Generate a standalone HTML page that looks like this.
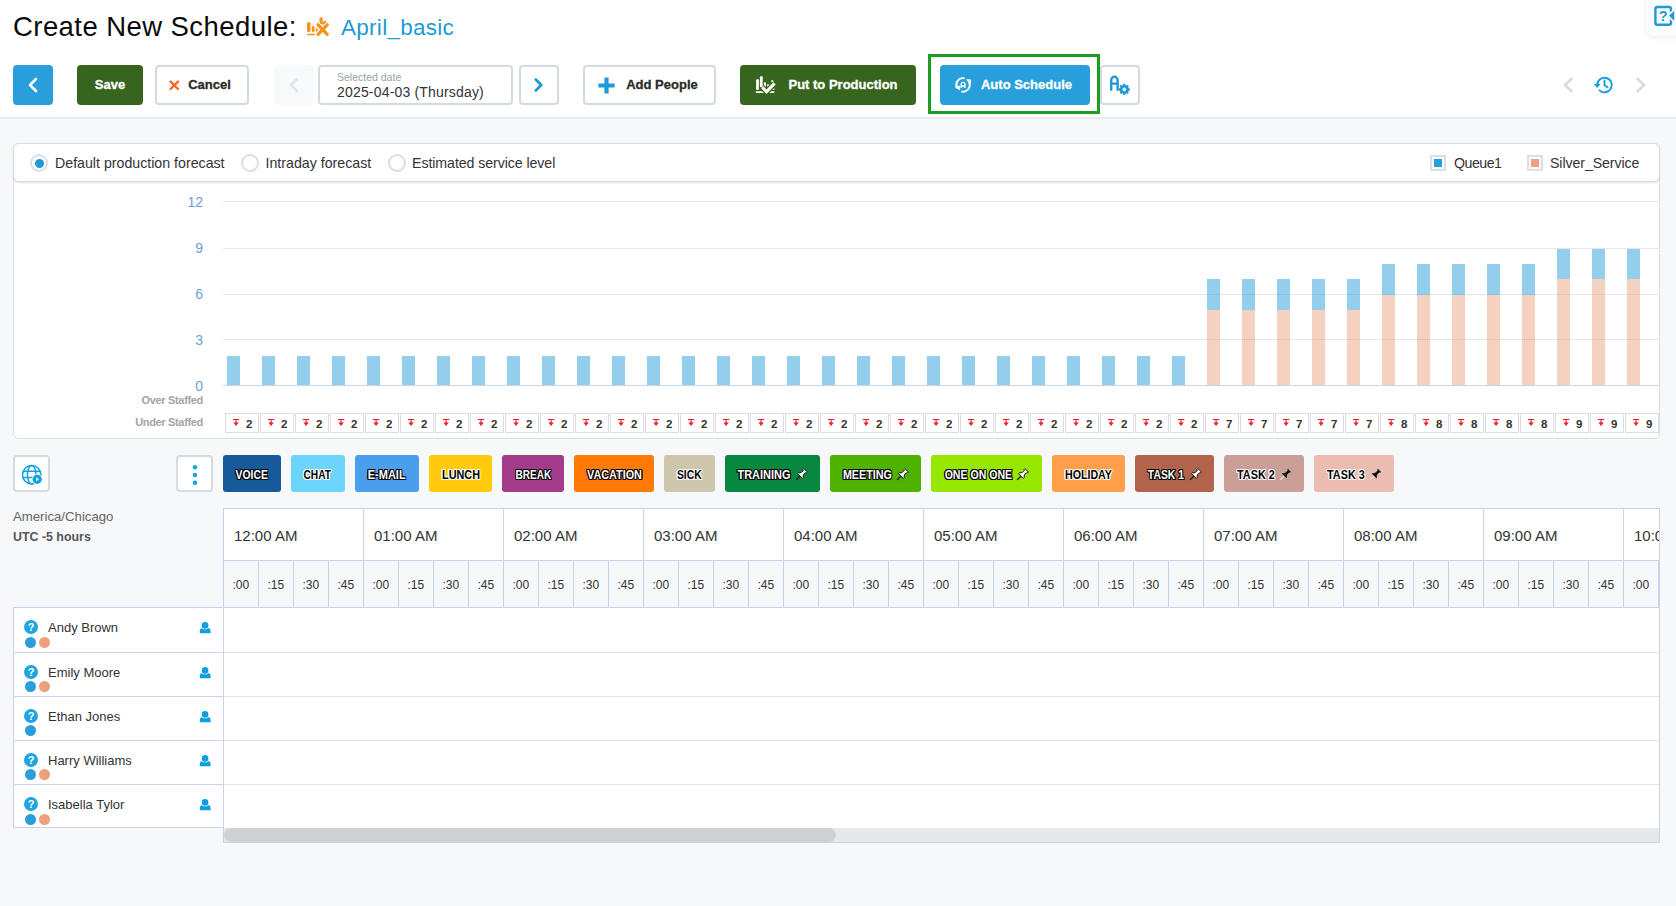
<!DOCTYPE html>
<html lang="en"><head><meta charset="utf-8"><title>Create New Schedule</title>
<style>
*{box-sizing:border-box;margin:0;padding:0}
html,body{width:1676px;height:906px;overflow:hidden}
body{background:#f6f8fa;font-family:"Liberation Sans",sans-serif;color:#222;position:relative}
.abs{position:absolute}
.hdr{position:absolute;left:0;top:0;width:1676px;height:119px;background:#fff;border-bottom:2px solid #e7ebee}
.title{position:absolute;left:13px;top:9px;font-size:27.5px;line-height:36px;color:#0a0a0a;white-space:nowrap;letter-spacing:0.43px}
.sname{position:absolute;left:341px;top:11px;font-size:22.5px;line-height:34px;color:#1f9ad6;white-space:nowrap;letter-spacing:0.28px}
.btn{position:absolute;top:65px;height:40px;border-radius:4px;display:flex;align-items:center;justify-content:center;font-weight:bold;font-size:13px;white-space:nowrap;-webkit-text-stroke:0.3px currentColor}
.btn.blue{background:#289fdb;color:#fff}
.btn.green{background:#38651d;color:#fff}
.btn.wh{background:#fff;border:2px solid #d2dbe3;color:#2b2b2b}
.cond{display:inline-block;position:relative;top:-.5px}

.panel{position:absolute;left:13px;top:143px;width:1647px;height:296px;background:#fff;border:1px solid #d6dee6;border-radius:6px}
.pbar{position:absolute;left:-1px;top:-1px;width:1647px;height:39px;background:#fff;border:1px solid #d6dee6;border-radius:6px;box-shadow:0 1px 2px rgba(120,140,160,.25)}
.radio{position:absolute;top:10px;width:18px;height:18px;border-radius:50%;border:2px solid #d8dfe4;background:#fff}
.radio.on::after{content:"";position:absolute;left:2.5px;top:2.5px;width:9px;height:9px;border-radius:50%;background:#1f9ad6}
.rl{position:absolute;top:9px;font-size:14.2px;line-height:20px;color:#333;white-space:nowrap}
.cb{position:absolute;top:11px;width:16px;height:16px;border:2px solid #d9e0e6;background:#fff}
.cb i{position:absolute;left:2px;top:2px;width:8px;height:8px}
.yl{position:absolute;width:40px;text-align:right;font-size:14px;line-height:16px;color:#6f9fd0}
.gl{position:absolute;left:209px;width:1437px;height:1px;background:#e6e6e6}
.bar{position:absolute;width:13px}
.sl{position:absolute;width:120px;text-align:right;font-size:11px;line-height:13px;color:#a4a4a4;font-weight:bold;letter-spacing:-.33px}
.uc{position:absolute;top:269px;width:33.5px;height:19.5px;border:1px solid #d9dde1;background:#fff;font-size:11.5px;font-weight:bold;color:#333;line-height:20.5px;padding-left:20px}
.uc svg{position:absolute;left:5.8px;top:4.7px;width:8.2px;height:8.2px}

.sq{position:absolute;top:455px;width:37px;height:37px;background:#fff;border:2px solid #d3dbe3;border-radius:4px}
.act{position:absolute;top:455px;height:37px;border-radius:3px;font-size:12px;font-weight:bold;color:#fff;white-space:nowrap;text-shadow:-1px -1px 0 #000,1px -1px 0 #000,-1px 1px 0 #000,1px 1px 0 #000,0 1px 0 #000,0 -1px 0 #000,1px 0 0 #000,-1px 0 0 #000}
.act.dk{color:#000;text-shadow:-1px -1px 0 #fff,1px -1px 0 #fff,-1px 1px 0 #fff,1px 1px 0 #fff,0 1px 0 #fff,0 -1px 0 #fff,1px 0 0 #fff,-1px 0 0 #fff}
.act span{position:absolute;top:12.5px;line-height:14px;display:block;transform-origin:center}
.act .pin{position:absolute;top:13px;width:13px;height:13px}
.tz{position:absolute;left:13px;font-size:13.2px;line-height:16px;color:#666;white-space:nowrap}
.grid{position:absolute;left:223px;top:508px;width:1437px;height:335px;border:1px solid #c9d3ef;background:#fff;overflow:hidden}
.hr{position:absolute;top:0;height:52px;width:140px;border-right:1px solid #c9d3ef;border-bottom:1px solid #c9d3ef;font-size:15px;line-height:53px;padding-left:10px;color:#333;white-space:nowrap;background:#fff}
.qr{position:absolute;top:52px;height:47px;width:35px;border-right:1px solid #c9d3ef;border-bottom:1px solid #c9d3ef;background:#f6f8fa;font-size:12px;line-height:49px;padding-left:8.5px;color:#333}
.rowl{position:absolute;left:0;width:1437px;height:1px;background:#e3e3e3}
.agents{position:absolute;left:13px;top:607px;width:211px;height:221px;border:1px solid #c9d3ef;background:#fff}
.ag{position:absolute;left:0;width:209px;border-bottom:1px solid #c9d3ef}
.ag .nm{position:absolute;left:34px;top:12px;font-size:13px;line-height:16px;color:#333;white-space:nowrap}
.ag .q{position:absolute;left:10px;top:12px;width:14px;height:14px;border-radius:50%;background:#1fa5e0;color:#fff;font-size:11px;font-weight:bold;line-height:14px;text-align:center}
.ag .d{position:absolute;top:29px;width:11px;height:11px;border-radius:50%}
.ag svg{position:absolute;left:184.5px;top:13.5px;overflow:visible}
.ag.first svg{top:14.3px}
</style></head>
<body>
<div class="hdr">
<div class="title">Create New Schedule:</div>
<svg class="abs" style="left:300px;top:12px" width="36" height="30" viewBox="0 0 36 30"><g fill="#f7931a"><rect x="7" y="9.9" width="3.5" height="10.3" rx="1.6"/><rect x="11.8" y="13.9" width="2.8" height="6.1" rx="1.3"/><path d="M15.9 15.4 L18.6 17.9 L15.9 20.2z"/><rect x="7" y="21.7" width="8" height="1.5" rx=".5"/><rect x="19.5" y="5.2" width="3.3" height="7" rx="1.6"/></g><g stroke="#fff" stroke-width="5" stroke-linecap="round"><path d="M18.1 12.8 L27.2 22.3 M27.2 12.8 L18.1 22.3"/></g><g stroke="#f7931a" stroke-width="3.3" stroke-linecap="round" fill="none"><path d="M18.1 12.8 L27.2 22.3 M27.2 12.8 L18.1 22.3"/><path d="M25.2 9.6 L23.2 11.6" stroke-width="2.2"/></g></svg>
<div class="sname">April_basic</div>
<div class="btn blue" style="left:13px;width:40px"><svg width="14" height="16" viewBox="0 0 14 16"><path d="M10 2 L4 8 L10 14" fill="none" stroke="#fff" stroke-width="2.6" stroke-linecap="round" stroke-linejoin="round"/></svg></div>
<div class="btn green" style="left:77px;width:66px"><span class="cond">Save</span></div>
<div class="btn wh" style="left:155px;width:94px"><svg width="11" height="11" viewBox="0 0 11 11" style="margin-right:8px;margin-left:-4px"><path d="M1.6 1.6 L9 9 M9 1.6 L1.6 9" stroke="#f26a1b" stroke-width="2.4" stroke-linecap="round"/></svg><span class="cond">Cancel</span></div>
<div class="btn" style="left:274px;width:39px;background:#f8f9fa"><svg width="14" height="16" viewBox="0 0 14 16"><path d="M10 2 L4 8 L10 14" fill="none" stroke="#dfe3e6" stroke-width="2.4" stroke-linecap="round" stroke-linejoin="round"/></svg></div>
<div class="btn wh" style="left:318px;width:195px;justify-content:flex-start;font-weight:normal"><div style="position:absolute;left:17px;top:4px;font-size:10.5px;color:#9aa3aa;line-height:13px;-webkit-text-stroke:0">Selected date</div><div style="position:absolute;left:17px;top:16px;font-size:14px;letter-spacing:.18px;color:#333;line-height:18px;-webkit-text-stroke:0">2025-04-03 (Thursday)</div></div>
<div class="btn wh" style="left:519px;width:40px"><svg width="14" height="16" viewBox="0 0 14 16"><path d="M3.8 2.6 L9.2 8 L3.8 13.4" fill="none" stroke="#1f9ad6" stroke-width="2.8" stroke-linecap="round" stroke-linejoin="round"/></svg></div>
<div class="btn wh" style="left:583px;width:133px"><svg width="17" height="17" viewBox="0 0 17 17" style="margin-right:11px;margin-left:-3px"><path d="M8.5 0.4 V16.6 M0.4 8.5 H16.6" stroke="#1f9ad6" stroke-width="4.2" stroke-linecap="butt"/></svg><span class="cond">Add People</span></div>
<div class="btn green" style="left:740px;width:176px"><svg width="36" height="30" viewBox="0 0 36 30" style="position:absolute;left:8px;top:5px"><g fill="#fff"><rect x="8.1" y="9.3" width="2.8" height="10.6" rx="1"/><rect x="11.9" y="6.3" width="2.8" height="11" rx="1"/><rect x="15.9" y="12.3" width="2.1" height="5" rx=".8"/><rect x="19.2" y="14.2" width="2" height="2.6" rx=".6"/><rect x="23.2" y="10.3" width="2.3" height="2.3" rx=".8"/><rect x="24.5" y="18" width="1.8" height="2" rx=".5"/><rect x="7.8" y="21.2" width="18.5" height="1.7" rx=".4"/></g><path d="M14.4 17.2 L18.5 21.8 L26.6 13.4" fill="none" stroke="#38651d" stroke-width="5.6" stroke-linejoin="miter"/><path d="M14.4 17.2 L18.5 21.8 L26.6 13.4" fill="none" stroke="#fff" stroke-width="3.1" stroke-linejoin="miter"/></svg><span class="cond" style="margin-left:30px">Put to Production</span></div>
<div class="abs" style="left:928px;top:54px;width:172px;height:60px;border:3px solid #1f9d22"></div>
<div class="btn blue" style="left:940px;width:150px"><svg width="20" height="20" viewBox="0 0 20 20" style="position:absolute;left:13px;top:10px"><g fill="none" stroke="#fff" stroke-width="1.9" stroke-linecap="round"><path d="M10.9 3.2 A6.7 6.7 0 0 0 3.9 12.6"/><path d="M16.3 7.6 A6.7 6.7 0 0 1 8.9 16.6"/></g><path d="M2.3 11.8 L6.6 11 L6.6 15z" fill="#fff" stroke="#fff" stroke-width=".7" stroke-linejoin="round"/><path d="M13.4 4.8 H17.6 V8.6z" fill="#fff" stroke="#fff" stroke-width=".7" stroke-linejoin="round"/><path d="M8.2 13 V9.2 a1.85 1.85 0 0 1 3.7 0 V13 M8.2 11 H11.9" fill="none" stroke="#fff" stroke-width="1.4"/></svg><span class="cond" style="margin-left:23px">Auto Schedule</span></div>
<div class="btn wh" style="left:1100px;width:40px"><svg width="40" height="40" viewBox="0 0 40 40" style="position:absolute;left:-2px;top:-2px"><path d="M11.2 24.8 V15 a3.2 3.2 0 0 1 6.4 0 V24.8 M11.2 18.6 H17.6" fill="none" stroke="#1f9ad6" stroke-width="2.4" stroke-linecap="round"/><g fill="#1f9ad6"><rect x="23.05" y="18.80" width="2.5" height="3" rx=".9" transform="rotate(0 24.3 24.4)"/><rect x="23.05" y="18.80" width="2.5" height="3" rx=".9" transform="rotate(45 24.3 24.4)"/><rect x="23.05" y="18.80" width="2.5" height="3" rx=".9" transform="rotate(90 24.3 24.4)"/><rect x="23.05" y="18.80" width="2.5" height="3" rx=".9" transform="rotate(135 24.3 24.4)"/><rect x="23.05" y="18.80" width="2.5" height="3" rx=".9" transform="rotate(180 24.3 24.4)"/><rect x="23.05" y="18.80" width="2.5" height="3" rx=".9" transform="rotate(225 24.3 24.4)"/><rect x="23.05" y="18.80" width="2.5" height="3" rx=".9" transform="rotate(270 24.3 24.4)"/><rect x="23.05" y="18.80" width="2.5" height="3" rx=".9" transform="rotate(315 24.3 24.4)"/></g><circle cx="24.3" cy="24.4" r="3.1" fill="none" stroke="#1f9ad6" stroke-width="2.6"/></svg></div>
<svg class="abs" style="left:1561px;top:76px" width="14" height="18" viewBox="0 0 14 18"><path d="M10.5 2.8 L4 9 L10.5 15.2" fill="none" stroke="#d9dde0" stroke-width="2.7" stroke-linecap="round" stroke-linejoin="round"/></svg>
<svg class="abs" style="left:1593px;top:74px" width="22" height="22" viewBox="0 0 22 22"><g fill="none" stroke="#14a0dc" stroke-width="1.9" stroke-linecap="round" stroke-linejoin="round"><path d="M4.2 11 A7.3 7.3 0 1 1 6.5 16.4"/><path d="M11.5 6.5 V11.3 L14.5 13.2"/></g><path d="M0.8 10 H7.6 L4.2 14z" fill="#14a0dc"/></svg>
<svg class="abs" style="left:1634px;top:76px" width="14" height="18" viewBox="0 0 14 18"><path d="M3.5 2.8 L10 9 L3.5 15.2" fill="none" stroke="#d9dde0" stroke-width="2.7" stroke-linecap="round" stroke-linejoin="round"/></svg>
<div class="abs" style="left:1646px;top:-6px;width:40px;height:42px;background:#fafbfc;border-radius:0 0 0 7px;box-shadow:0 1px 6px rgba(60,70,80,.11)"></div>
<svg class="abs" style="left:1650px;top:0px" width="26" height="32" viewBox="0 0 26 32"><rect x="5.4" y="7" width="15.6" height="17.8" rx="2" fill="none" stroke="#1f9ad6" stroke-width="2.4"/><path d="M25.2 9 L17.6 15.8 L25.2 22.6z" fill="#1f9ad6" stroke="#f9fafb" stroke-width="2" /><path d="M24 10.9 L19.4 15.8 L24 20.6z" fill="#1f9ad6"/><text x="13.2" y="21.2" font-size="14.5" font-weight="bold" fill="#1f9ad6" text-anchor="middle" font-family="Liberation Sans, sans-serif">?</text></svg>
</div>
<div class="panel">
<div class="pbar">
<div class="radio on" style="left:16px"></div><div class="rl" style="left:41px">Default production forecast</div>
<div class="radio" style="left:227px"></div><div class="rl" style="left:251.5px">Intraday forecast</div>
<div class="radio" style="left:374px"></div><div class="rl" style="left:398px;letter-spacing:-.08px">Estimated service level</div>
<div class="cb" style="left:1416px"><i style="background:#289fdb"></i></div><div class="rl" style="left:1440px;letter-spacing:-.5px">Queue1</div>
<div class="cb" style="left:1513px"><i style="background:#f0a07a"></i></div><div class="rl" style="left:1536px;letter-spacing:-.1px">Silver_Service</div>
</div>
<div class="yl" style="left:149px;top:50px">12</div>
<div class="gl" style="top:57px"></div>
<div class="yl" style="left:149px;top:96px">9</div>
<div class="gl" style="top:104px"></div>
<div class="yl" style="left:149px;top:142px">6</div>
<div class="gl" style="top:150px"></div>
<div class="yl" style="left:149px;top:188px">3</div>
<div class="gl" style="top:195px"></div>
<div class="yl" style="left:149px;top:234px">0</div>
<div class="gl" style="top:241px;background:#ccd6eb"></div>
<div class="bar" style="left:213px;top:212px;height:29px;background:rgba(40,159,219,.5)"></div>
<div class="bar" style="left:248px;top:212px;height:29px;background:rgba(40,159,219,.5)"></div>
<div class="bar" style="left:283px;top:212px;height:29px;background:rgba(40,159,219,.5)"></div>
<div class="bar" style="left:318px;top:212px;height:29px;background:rgba(40,159,219,.5)"></div>
<div class="bar" style="left:353px;top:212px;height:29px;background:rgba(40,159,219,.5)"></div>
<div class="bar" style="left:388px;top:212px;height:29px;background:rgba(40,159,219,.5)"></div>
<div class="bar" style="left:423px;top:212px;height:29px;background:rgba(40,159,219,.5)"></div>
<div class="bar" style="left:458px;top:212px;height:29px;background:rgba(40,159,219,.5)"></div>
<div class="bar" style="left:493px;top:212px;height:29px;background:rgba(40,159,219,.5)"></div>
<div class="bar" style="left:528px;top:212px;height:29px;background:rgba(40,159,219,.5)"></div>
<div class="bar" style="left:563px;top:212px;height:29px;background:rgba(40,159,219,.5)"></div>
<div class="bar" style="left:598px;top:212px;height:29px;background:rgba(40,159,219,.5)"></div>
<div class="bar" style="left:633px;top:212px;height:29px;background:rgba(40,159,219,.5)"></div>
<div class="bar" style="left:668px;top:212px;height:29px;background:rgba(40,159,219,.5)"></div>
<div class="bar" style="left:703px;top:212px;height:29px;background:rgba(40,159,219,.5)"></div>
<div class="bar" style="left:738px;top:212px;height:29px;background:rgba(40,159,219,.5)"></div>
<div class="bar" style="left:773px;top:212px;height:29px;background:rgba(40,159,219,.5)"></div>
<div class="bar" style="left:808px;top:212px;height:29px;background:rgba(40,159,219,.5)"></div>
<div class="bar" style="left:843px;top:212px;height:29px;background:rgba(40,159,219,.5)"></div>
<div class="bar" style="left:878px;top:212px;height:29px;background:rgba(40,159,219,.5)"></div>
<div class="bar" style="left:913px;top:212px;height:29px;background:rgba(40,159,219,.5)"></div>
<div class="bar" style="left:948px;top:212px;height:29px;background:rgba(40,159,219,.5)"></div>
<div class="bar" style="left:983px;top:212px;height:29px;background:rgba(40,159,219,.5)"></div>
<div class="bar" style="left:1018px;top:212px;height:29px;background:rgba(40,159,219,.5)"></div>
<div class="bar" style="left:1053px;top:212px;height:29px;background:rgba(40,159,219,.5)"></div>
<div class="bar" style="left:1088px;top:212px;height:29px;background:rgba(40,159,219,.5)"></div>
<div class="bar" style="left:1123px;top:212px;height:29px;background:rgba(40,159,219,.5)"></div>
<div class="bar" style="left:1158px;top:212px;height:29px;background:rgba(40,159,219,.5)"></div>
<div class="bar" style="left:1193px;top:166px;height:75px;background:rgba(236,166,130,.5)"></div>
<div class="bar" style="left:1193px;top:135px;height:31px;background:rgba(40,159,219,.5)"></div>
<div class="bar" style="left:1228px;top:166px;height:75px;background:rgba(236,166,130,.5)"></div>
<div class="bar" style="left:1228px;top:135px;height:31px;background:rgba(40,159,219,.5)"></div>
<div class="bar" style="left:1263px;top:166px;height:75px;background:rgba(236,166,130,.5)"></div>
<div class="bar" style="left:1263px;top:135px;height:31px;background:rgba(40,159,219,.5)"></div>
<div class="bar" style="left:1298px;top:166px;height:75px;background:rgba(236,166,130,.5)"></div>
<div class="bar" style="left:1298px;top:135px;height:31px;background:rgba(40,159,219,.5)"></div>
<div class="bar" style="left:1333px;top:166px;height:75px;background:rgba(236,166,130,.5)"></div>
<div class="bar" style="left:1333px;top:135px;height:31px;background:rgba(40,159,219,.5)"></div>
<div class="bar" style="left:1368px;top:151px;height:90px;background:rgba(236,166,130,.5)"></div>
<div class="bar" style="left:1368px;top:120px;height:31px;background:rgba(40,159,219,.5)"></div>
<div class="bar" style="left:1403px;top:151px;height:90px;background:rgba(236,166,130,.5)"></div>
<div class="bar" style="left:1403px;top:120px;height:31px;background:rgba(40,159,219,.5)"></div>
<div class="bar" style="left:1438px;top:151px;height:90px;background:rgba(236,166,130,.5)"></div>
<div class="bar" style="left:1438px;top:120px;height:31px;background:rgba(40,159,219,.5)"></div>
<div class="bar" style="left:1473px;top:151px;height:90px;background:rgba(236,166,130,.5)"></div>
<div class="bar" style="left:1473px;top:120px;height:31px;background:rgba(40,159,219,.5)"></div>
<div class="bar" style="left:1508px;top:151px;height:90px;background:rgba(236,166,130,.5)"></div>
<div class="bar" style="left:1508px;top:120px;height:31px;background:rgba(40,159,219,.5)"></div>
<div class="bar" style="left:1543px;top:135px;height:106px;background:rgba(236,166,130,.5)"></div>
<div class="bar" style="left:1543px;top:105px;height:30px;background:rgba(40,159,219,.5)"></div>
<div class="bar" style="left:1578px;top:135px;height:106px;background:rgba(236,166,130,.5)"></div>
<div class="bar" style="left:1578px;top:105px;height:30px;background:rgba(40,159,219,.5)"></div>
<div class="bar" style="left:1613px;top:135px;height:106px;background:rgba(236,166,130,.5)"></div>
<div class="bar" style="left:1613px;top:105px;height:30px;background:rgba(40,159,219,.5)"></div>
<div class="sl" style="left:69px;top:250px">Over Staffed</div>
<div class="sl" style="left:69px;top:272px">Under Staffed</div>
<div class="uc" style="left:211px"><svg width="9" height="9" viewBox="0 0 9 9"><path d="M1 0.6 H8" stroke="#e8202a" stroke-width="1.2"/><path d="M4.5 1.5 V5" stroke="#e8202a" stroke-width="1.4"/><path d="M1.5 3.8 H7.5 L4.5 7.8z" fill="#e8202a"/></svg>2</div>
<div class="uc" style="left:246px"><svg width="9" height="9" viewBox="0 0 9 9"><path d="M1 0.6 H8" stroke="#e8202a" stroke-width="1.2"/><path d="M4.5 1.5 V5" stroke="#e8202a" stroke-width="1.4"/><path d="M1.5 3.8 H7.5 L4.5 7.8z" fill="#e8202a"/></svg>2</div>
<div class="uc" style="left:281px"><svg width="9" height="9" viewBox="0 0 9 9"><path d="M1 0.6 H8" stroke="#e8202a" stroke-width="1.2"/><path d="M4.5 1.5 V5" stroke="#e8202a" stroke-width="1.4"/><path d="M1.5 3.8 H7.5 L4.5 7.8z" fill="#e8202a"/></svg>2</div>
<div class="uc" style="left:316px"><svg width="9" height="9" viewBox="0 0 9 9"><path d="M1 0.6 H8" stroke="#e8202a" stroke-width="1.2"/><path d="M4.5 1.5 V5" stroke="#e8202a" stroke-width="1.4"/><path d="M1.5 3.8 H7.5 L4.5 7.8z" fill="#e8202a"/></svg>2</div>
<div class="uc" style="left:351px"><svg width="9" height="9" viewBox="0 0 9 9"><path d="M1 0.6 H8" stroke="#e8202a" stroke-width="1.2"/><path d="M4.5 1.5 V5" stroke="#e8202a" stroke-width="1.4"/><path d="M1.5 3.8 H7.5 L4.5 7.8z" fill="#e8202a"/></svg>2</div>
<div class="uc" style="left:386px"><svg width="9" height="9" viewBox="0 0 9 9"><path d="M1 0.6 H8" stroke="#e8202a" stroke-width="1.2"/><path d="M4.5 1.5 V5" stroke="#e8202a" stroke-width="1.4"/><path d="M1.5 3.8 H7.5 L4.5 7.8z" fill="#e8202a"/></svg>2</div>
<div class="uc" style="left:421px"><svg width="9" height="9" viewBox="0 0 9 9"><path d="M1 0.6 H8" stroke="#e8202a" stroke-width="1.2"/><path d="M4.5 1.5 V5" stroke="#e8202a" stroke-width="1.4"/><path d="M1.5 3.8 H7.5 L4.5 7.8z" fill="#e8202a"/></svg>2</div>
<div class="uc" style="left:456px"><svg width="9" height="9" viewBox="0 0 9 9"><path d="M1 0.6 H8" stroke="#e8202a" stroke-width="1.2"/><path d="M4.5 1.5 V5" stroke="#e8202a" stroke-width="1.4"/><path d="M1.5 3.8 H7.5 L4.5 7.8z" fill="#e8202a"/></svg>2</div>
<div class="uc" style="left:491px"><svg width="9" height="9" viewBox="0 0 9 9"><path d="M1 0.6 H8" stroke="#e8202a" stroke-width="1.2"/><path d="M4.5 1.5 V5" stroke="#e8202a" stroke-width="1.4"/><path d="M1.5 3.8 H7.5 L4.5 7.8z" fill="#e8202a"/></svg>2</div>
<div class="uc" style="left:526px"><svg width="9" height="9" viewBox="0 0 9 9"><path d="M1 0.6 H8" stroke="#e8202a" stroke-width="1.2"/><path d="M4.5 1.5 V5" stroke="#e8202a" stroke-width="1.4"/><path d="M1.5 3.8 H7.5 L4.5 7.8z" fill="#e8202a"/></svg>2</div>
<div class="uc" style="left:561px"><svg width="9" height="9" viewBox="0 0 9 9"><path d="M1 0.6 H8" stroke="#e8202a" stroke-width="1.2"/><path d="M4.5 1.5 V5" stroke="#e8202a" stroke-width="1.4"/><path d="M1.5 3.8 H7.5 L4.5 7.8z" fill="#e8202a"/></svg>2</div>
<div class="uc" style="left:596px"><svg width="9" height="9" viewBox="0 0 9 9"><path d="M1 0.6 H8" stroke="#e8202a" stroke-width="1.2"/><path d="M4.5 1.5 V5" stroke="#e8202a" stroke-width="1.4"/><path d="M1.5 3.8 H7.5 L4.5 7.8z" fill="#e8202a"/></svg>2</div>
<div class="uc" style="left:631px"><svg width="9" height="9" viewBox="0 0 9 9"><path d="M1 0.6 H8" stroke="#e8202a" stroke-width="1.2"/><path d="M4.5 1.5 V5" stroke="#e8202a" stroke-width="1.4"/><path d="M1.5 3.8 H7.5 L4.5 7.8z" fill="#e8202a"/></svg>2</div>
<div class="uc" style="left:666px"><svg width="9" height="9" viewBox="0 0 9 9"><path d="M1 0.6 H8" stroke="#e8202a" stroke-width="1.2"/><path d="M4.5 1.5 V5" stroke="#e8202a" stroke-width="1.4"/><path d="M1.5 3.8 H7.5 L4.5 7.8z" fill="#e8202a"/></svg>2</div>
<div class="uc" style="left:701px"><svg width="9" height="9" viewBox="0 0 9 9"><path d="M1 0.6 H8" stroke="#e8202a" stroke-width="1.2"/><path d="M4.5 1.5 V5" stroke="#e8202a" stroke-width="1.4"/><path d="M1.5 3.8 H7.5 L4.5 7.8z" fill="#e8202a"/></svg>2</div>
<div class="uc" style="left:736px"><svg width="9" height="9" viewBox="0 0 9 9"><path d="M1 0.6 H8" stroke="#e8202a" stroke-width="1.2"/><path d="M4.5 1.5 V5" stroke="#e8202a" stroke-width="1.4"/><path d="M1.5 3.8 H7.5 L4.5 7.8z" fill="#e8202a"/></svg>2</div>
<div class="uc" style="left:771px"><svg width="9" height="9" viewBox="0 0 9 9"><path d="M1 0.6 H8" stroke="#e8202a" stroke-width="1.2"/><path d="M4.5 1.5 V5" stroke="#e8202a" stroke-width="1.4"/><path d="M1.5 3.8 H7.5 L4.5 7.8z" fill="#e8202a"/></svg>2</div>
<div class="uc" style="left:806px"><svg width="9" height="9" viewBox="0 0 9 9"><path d="M1 0.6 H8" stroke="#e8202a" stroke-width="1.2"/><path d="M4.5 1.5 V5" stroke="#e8202a" stroke-width="1.4"/><path d="M1.5 3.8 H7.5 L4.5 7.8z" fill="#e8202a"/></svg>2</div>
<div class="uc" style="left:841px"><svg width="9" height="9" viewBox="0 0 9 9"><path d="M1 0.6 H8" stroke="#e8202a" stroke-width="1.2"/><path d="M4.5 1.5 V5" stroke="#e8202a" stroke-width="1.4"/><path d="M1.5 3.8 H7.5 L4.5 7.8z" fill="#e8202a"/></svg>2</div>
<div class="uc" style="left:876px"><svg width="9" height="9" viewBox="0 0 9 9"><path d="M1 0.6 H8" stroke="#e8202a" stroke-width="1.2"/><path d="M4.5 1.5 V5" stroke="#e8202a" stroke-width="1.4"/><path d="M1.5 3.8 H7.5 L4.5 7.8z" fill="#e8202a"/></svg>2</div>
<div class="uc" style="left:911px"><svg width="9" height="9" viewBox="0 0 9 9"><path d="M1 0.6 H8" stroke="#e8202a" stroke-width="1.2"/><path d="M4.5 1.5 V5" stroke="#e8202a" stroke-width="1.4"/><path d="M1.5 3.8 H7.5 L4.5 7.8z" fill="#e8202a"/></svg>2</div>
<div class="uc" style="left:946px"><svg width="9" height="9" viewBox="0 0 9 9"><path d="M1 0.6 H8" stroke="#e8202a" stroke-width="1.2"/><path d="M4.5 1.5 V5" stroke="#e8202a" stroke-width="1.4"/><path d="M1.5 3.8 H7.5 L4.5 7.8z" fill="#e8202a"/></svg>2</div>
<div class="uc" style="left:981px"><svg width="9" height="9" viewBox="0 0 9 9"><path d="M1 0.6 H8" stroke="#e8202a" stroke-width="1.2"/><path d="M4.5 1.5 V5" stroke="#e8202a" stroke-width="1.4"/><path d="M1.5 3.8 H7.5 L4.5 7.8z" fill="#e8202a"/></svg>2</div>
<div class="uc" style="left:1016px"><svg width="9" height="9" viewBox="0 0 9 9"><path d="M1 0.6 H8" stroke="#e8202a" stroke-width="1.2"/><path d="M4.5 1.5 V5" stroke="#e8202a" stroke-width="1.4"/><path d="M1.5 3.8 H7.5 L4.5 7.8z" fill="#e8202a"/></svg>2</div>
<div class="uc" style="left:1051px"><svg width="9" height="9" viewBox="0 0 9 9"><path d="M1 0.6 H8" stroke="#e8202a" stroke-width="1.2"/><path d="M4.5 1.5 V5" stroke="#e8202a" stroke-width="1.4"/><path d="M1.5 3.8 H7.5 L4.5 7.8z" fill="#e8202a"/></svg>2</div>
<div class="uc" style="left:1086px"><svg width="9" height="9" viewBox="0 0 9 9"><path d="M1 0.6 H8" stroke="#e8202a" stroke-width="1.2"/><path d="M4.5 1.5 V5" stroke="#e8202a" stroke-width="1.4"/><path d="M1.5 3.8 H7.5 L4.5 7.8z" fill="#e8202a"/></svg>2</div>
<div class="uc" style="left:1121px"><svg width="9" height="9" viewBox="0 0 9 9"><path d="M1 0.6 H8" stroke="#e8202a" stroke-width="1.2"/><path d="M4.5 1.5 V5" stroke="#e8202a" stroke-width="1.4"/><path d="M1.5 3.8 H7.5 L4.5 7.8z" fill="#e8202a"/></svg>2</div>
<div class="uc" style="left:1156px"><svg width="9" height="9" viewBox="0 0 9 9"><path d="M1 0.6 H8" stroke="#e8202a" stroke-width="1.2"/><path d="M4.5 1.5 V5" stroke="#e8202a" stroke-width="1.4"/><path d="M1.5 3.8 H7.5 L4.5 7.8z" fill="#e8202a"/></svg>2</div>
<div class="uc" style="left:1191px"><svg width="9" height="9" viewBox="0 0 9 9"><path d="M1 0.6 H8" stroke="#e8202a" stroke-width="1.2"/><path d="M4.5 1.5 V5" stroke="#e8202a" stroke-width="1.4"/><path d="M1.5 3.8 H7.5 L4.5 7.8z" fill="#e8202a"/></svg>7</div>
<div class="uc" style="left:1226px"><svg width="9" height="9" viewBox="0 0 9 9"><path d="M1 0.6 H8" stroke="#e8202a" stroke-width="1.2"/><path d="M4.5 1.5 V5" stroke="#e8202a" stroke-width="1.4"/><path d="M1.5 3.8 H7.5 L4.5 7.8z" fill="#e8202a"/></svg>7</div>
<div class="uc" style="left:1261px"><svg width="9" height="9" viewBox="0 0 9 9"><path d="M1 0.6 H8" stroke="#e8202a" stroke-width="1.2"/><path d="M4.5 1.5 V5" stroke="#e8202a" stroke-width="1.4"/><path d="M1.5 3.8 H7.5 L4.5 7.8z" fill="#e8202a"/></svg>7</div>
<div class="uc" style="left:1296px"><svg width="9" height="9" viewBox="0 0 9 9"><path d="M1 0.6 H8" stroke="#e8202a" stroke-width="1.2"/><path d="M4.5 1.5 V5" stroke="#e8202a" stroke-width="1.4"/><path d="M1.5 3.8 H7.5 L4.5 7.8z" fill="#e8202a"/></svg>7</div>
<div class="uc" style="left:1331px"><svg width="9" height="9" viewBox="0 0 9 9"><path d="M1 0.6 H8" stroke="#e8202a" stroke-width="1.2"/><path d="M4.5 1.5 V5" stroke="#e8202a" stroke-width="1.4"/><path d="M1.5 3.8 H7.5 L4.5 7.8z" fill="#e8202a"/></svg>7</div>
<div class="uc" style="left:1366px"><svg width="9" height="9" viewBox="0 0 9 9"><path d="M1 0.6 H8" stroke="#e8202a" stroke-width="1.2"/><path d="M4.5 1.5 V5" stroke="#e8202a" stroke-width="1.4"/><path d="M1.5 3.8 H7.5 L4.5 7.8z" fill="#e8202a"/></svg>8</div>
<div class="uc" style="left:1401px"><svg width="9" height="9" viewBox="0 0 9 9"><path d="M1 0.6 H8" stroke="#e8202a" stroke-width="1.2"/><path d="M4.5 1.5 V5" stroke="#e8202a" stroke-width="1.4"/><path d="M1.5 3.8 H7.5 L4.5 7.8z" fill="#e8202a"/></svg>8</div>
<div class="uc" style="left:1436px"><svg width="9" height="9" viewBox="0 0 9 9"><path d="M1 0.6 H8" stroke="#e8202a" stroke-width="1.2"/><path d="M4.5 1.5 V5" stroke="#e8202a" stroke-width="1.4"/><path d="M1.5 3.8 H7.5 L4.5 7.8z" fill="#e8202a"/></svg>8</div>
<div class="uc" style="left:1471px"><svg width="9" height="9" viewBox="0 0 9 9"><path d="M1 0.6 H8" stroke="#e8202a" stroke-width="1.2"/><path d="M4.5 1.5 V5" stroke="#e8202a" stroke-width="1.4"/><path d="M1.5 3.8 H7.5 L4.5 7.8z" fill="#e8202a"/></svg>8</div>
<div class="uc" style="left:1506px"><svg width="9" height="9" viewBox="0 0 9 9"><path d="M1 0.6 H8" stroke="#e8202a" stroke-width="1.2"/><path d="M4.5 1.5 V5" stroke="#e8202a" stroke-width="1.4"/><path d="M1.5 3.8 H7.5 L4.5 7.8z" fill="#e8202a"/></svg>8</div>
<div class="uc" style="left:1541px"><svg width="9" height="9" viewBox="0 0 9 9"><path d="M1 0.6 H8" stroke="#e8202a" stroke-width="1.2"/><path d="M4.5 1.5 V5" stroke="#e8202a" stroke-width="1.4"/><path d="M1.5 3.8 H7.5 L4.5 7.8z" fill="#e8202a"/></svg>9</div>
<div class="uc" style="left:1576px"><svg width="9" height="9" viewBox="0 0 9 9"><path d="M1 0.6 H8" stroke="#e8202a" stroke-width="1.2"/><path d="M4.5 1.5 V5" stroke="#e8202a" stroke-width="1.4"/><path d="M1.5 3.8 H7.5 L4.5 7.8z" fill="#e8202a"/></svg>9</div>
<div class="uc" style="left:1611px"><svg width="9" height="9" viewBox="0 0 9 9"><path d="M1 0.6 H8" stroke="#e8202a" stroke-width="1.2"/><path d="M4.5 1.5 V5" stroke="#e8202a" stroke-width="1.4"/><path d="M1.5 3.8 H7.5 L4.5 7.8z" fill="#e8202a"/></svg>9</div>
</div>
<div class="sq" style="left:13px"><svg width="26" height="26" viewBox="0 0 26 26" style="position:absolute;left:5px;top:5px"><g fill="none" stroke="#129fe0" stroke-width="1.5"><circle cx="11.7" cy="12.8" r="9.2"/><ellipse cx="11.7" cy="12.8" rx="4.3" ry="9.2"/><path d="M3.2 9.3 H20.2 M3 15.6 H13"/></g><circle cx="17.2" cy="17.3" r="5.4" fill="#fff"/><circle cx="17.2" cy="17.3" r="4.6" fill="#129fe0"/><path d="M16 15.2 V19.4 L19.3 17.3z" fill="#d8effa"/></svg></div>
<div class="sq" style="left:176px"><svg width="6" height="24" viewBox="0 0 6 24" style="position:absolute;left:14px;top:6px"><circle cx="3" cy="4.2" r="2.25" fill="#12a5e0"/><circle cx="3" cy="12" r="2.25" fill="#12a5e0"/><circle cx="3" cy="19.8" r="2.25" fill="#12a5e0"/></svg></div>
<div class="act" style="left:223px;width:58px;background:#165a9a"><span style="left:10.28px;transform:scaleX(0.865)">VOICE</span></div>
<div class="act dk" style="left:291px;width:54px;background:#6dd5fd"><span style="left:10.28px;transform:scaleX(0.848)">CHAT</span></div>
<div class="act" style="left:355px;width:64px;background:#4a9fec"><span style="left:10.73px;transform:scaleX(0.919)">E-MAIL</span></div>
<div class="act dk" style="left:429px;width:63px;background:#ffcb0c"><span style="left:10.60px;transform:scaleX(0.905)">LUNCH</span></div>
<div class="act" style="left:502px;width:62px;background:#a23b8a"><span style="left:9.77px;transform:scaleX(0.837)">BREAK</span></div>
<div class="act" style="left:574px;width:80px;background:#ff7a05"><span style="left:9.55px;transform:scaleX(0.903)">VACATION</span></div>
<div class="act dk" style="left:664px;width:51px;background:#cfc7ab"><span style="left:11.16px;transform:scaleX(0.865)">SICK</span></div>
<div class="act" style="left:725px;width:95px;background:#06883e"><span style="left:9.50px;transform:scaleX(0.914)">TRAINING</span><svg class="pin" style="left:70.0px" width="14" height="14" viewBox="0 0 14 14"><g transform="rotate(45 7 7)"><path d="M7 9.5 V14.6" stroke="#222" stroke-width="1.5" stroke-linecap="round"/><path d="M4.4 0.6 H9.6 V2.1 L8.7 2.7 V5.8 L10.6 8.2 V9.4 H3.4 V8.2 L5.3 5.8 V2.7 L4.4 2.1z" fill="#fff" stroke="#111" stroke-width="1" stroke-linejoin="round"/></g></svg></div>
<div class="act" style="left:830px;width:91px;background:#50b200"><span style="left:9.66px;transform:scaleX(0.894)">MEETING</span><svg class="pin" style="left:66.0px" width="14" height="14" viewBox="0 0 14 14"><g transform="rotate(45 7 7)"><path d="M7 9.5 V14.6" stroke="#222" stroke-width="1.5" stroke-linecap="round"/><path d="M4.4 0.6 H9.6 V2.1 L8.7 2.7 V5.8 L10.6 8.2 V9.4 H3.4 V8.2 L5.3 5.8 V2.7 L4.4 2.1z" fill="#fff" stroke="#111" stroke-width="1" stroke-linejoin="round"/></g></svg></div>
<div class="act" style="left:931px;width:111px;background:#97e600"><span style="left:8.75px;transform:scaleX(0.879)">ONE ON ONE</span><svg class="pin" style="left:85.4px" width="14" height="14" viewBox="0 0 14 14"><g transform="rotate(45 7 7)"><path d="M7 9.5 V14.6" stroke="#222" stroke-width="1.5" stroke-linecap="round"/><path d="M4.4 0.6 H9.6 V2.1 L8.7 2.7 V5.8 L10.6 8.2 V9.4 H3.4 V8.2 L5.3 5.8 V2.7 L4.4 2.1z" fill="#fff" stroke="#111" stroke-width="1" stroke-linejoin="round"/></g></svg></div>
<div class="act dk" style="left:1052px;width:73px;background:#ff9f4a"><span style="left:9.64px;transform:scaleX(0.888)">HOLIDAY</span></div>
<div class="act" style="left:1135px;width:79px;background:#b1634c"><span style="left:9.80px;transform:scaleX(0.866)">TASK 1</span><svg class="pin" style="left:54.0px" width="14" height="14" viewBox="0 0 14 14"><g transform="rotate(45 7 7)"><path d="M7 9.5 V14.6" stroke="#222" stroke-width="1.5" stroke-linecap="round"/><path d="M4.4 0.6 H9.6 V2.1 L8.7 2.7 V5.8 L10.6 8.2 V9.4 H3.4 V8.2 L5.3 5.8 V2.7 L4.4 2.1z" fill="#fff" stroke="#111" stroke-width="1" stroke-linejoin="round"/></g></svg></div>
<div class="act dk" style="left:1224px;width:80px;background:#c99f97"><span style="left:11.30px;transform:scaleX(0.902)">TASK 2</span><svg class="pin" style="left:55.4px" width="14" height="14" viewBox="0 0 14 14"><g transform="rotate(45 7 7)"><path d="M7 9.5 V14.6" stroke="#ddd" stroke-width="1.5" stroke-linecap="round"/><path d="M4.4 0.6 H9.6 V2.1 L8.7 2.7 V5.8 L10.6 8.2 V9.4 H3.4 V8.2 L5.3 5.8 V2.7 L4.4 2.1z" fill="#111" stroke="#f4ece8" stroke-width="0.5" stroke-linejoin="round"/></g></svg></div>
<div class="act dk" style="left:1314px;width:80px;background:#ebbcb0"><span style="left:11.30px;transform:scaleX(0.902)">TASK 3</span><svg class="pin" style="left:55.4px" width="14" height="14" viewBox="0 0 14 14"><g transform="rotate(45 7 7)"><path d="M7 9.5 V14.6" stroke="#ddd" stroke-width="1.5" stroke-linecap="round"/><path d="M4.4 0.6 H9.6 V2.1 L8.7 2.7 V5.8 L10.6 8.2 V9.4 H3.4 V8.2 L5.3 5.8 V2.7 L4.4 2.1z" fill="#111" stroke="#f4ece8" stroke-width="0.5" stroke-linejoin="round"/></g></svg></div>
<div class="tz" style="top:508.7px">America/Chicago</div>
<div class="tz" style="top:529px;font-weight:bold;color:#555;font-size:12.4px">UTC -5 hours</div>
<div class="grid">
<div class="hr" style="left:0px">12:00 AM</div>
<div class="hr" style="left:140px">01:00 AM</div>
<div class="hr" style="left:280px">02:00 AM</div>
<div class="hr" style="left:420px">03:00 AM</div>
<div class="hr" style="left:560px">04:00 AM</div>
<div class="hr" style="left:700px">05:00 AM</div>
<div class="hr" style="left:840px">06:00 AM</div>
<div class="hr" style="left:980px">07:00 AM</div>
<div class="hr" style="left:1120px">08:00 AM</div>
<div class="hr" style="left:1260px">09:00 AM</div>
<div class="hr" style="left:1400px">10:00 AM</div>
<div class="qr" style="left:0px">:00</div>
<div class="qr" style="left:35px">:15</div>
<div class="qr" style="left:70px">:30</div>
<div class="qr" style="left:105px">:45</div>
<div class="qr" style="left:140px">:00</div>
<div class="qr" style="left:175px">:15</div>
<div class="qr" style="left:210px">:30</div>
<div class="qr" style="left:245px">:45</div>
<div class="qr" style="left:280px">:00</div>
<div class="qr" style="left:315px">:15</div>
<div class="qr" style="left:350px">:30</div>
<div class="qr" style="left:385px">:45</div>
<div class="qr" style="left:420px">:00</div>
<div class="qr" style="left:455px">:15</div>
<div class="qr" style="left:490px">:30</div>
<div class="qr" style="left:525px">:45</div>
<div class="qr" style="left:560px">:00</div>
<div class="qr" style="left:595px">:15</div>
<div class="qr" style="left:630px">:30</div>
<div class="qr" style="left:665px">:45</div>
<div class="qr" style="left:700px">:00</div>
<div class="qr" style="left:735px">:15</div>
<div class="qr" style="left:770px">:30</div>
<div class="qr" style="left:805px">:45</div>
<div class="qr" style="left:840px">:00</div>
<div class="qr" style="left:875px">:15</div>
<div class="qr" style="left:910px">:30</div>
<div class="qr" style="left:945px">:45</div>
<div class="qr" style="left:980px">:00</div>
<div class="qr" style="left:1015px">:15</div>
<div class="qr" style="left:1050px">:30</div>
<div class="qr" style="left:1085px">:45</div>
<div class="qr" style="left:1120px">:00</div>
<div class="qr" style="left:1155px">:15</div>
<div class="qr" style="left:1190px">:30</div>
<div class="qr" style="left:1225px">:45</div>
<div class="qr" style="left:1260px">:00</div>
<div class="qr" style="left:1295px">:15</div>
<div class="qr" style="left:1330px">:30</div>
<div class="qr" style="left:1365px">:45</div>
<div class="qr" style="left:1400px">:00</div>
<div class="qr" style="left:1435px">:15</div>
<div class="rowl" style="top:143px"></div>
<div class="rowl" style="top:187px"></div>
<div class="rowl" style="top:231px"></div>
<div class="rowl" style="top:275px"></div>
<div class="abs" style="left:0;top:319px;width:1437px;height:15px;background:#e5e9ec"></div>
<div class="abs" style="left:0;top:319px;width:612px;height:14px;background:#ced2d6;border-radius:7px"></div>
</div>
<div class="agents">
<div class="ag first" style="top:0px;height:45px"><div class="q">?</div><div class="nm">Andy Brown</div><div class="d" style="left:11px;top:29px;background:#289fdb"></div><div class="d" style="left:25px;top:29px;background:#eda07c"></div><svg width="12" height="12" viewBox="0 0 12 12"><path d="M0.8 11.3 V9.2 Q0.8 6 3.8 6 H8.6 Q11.6 6 11.6 9.2 V11.3z" fill="#0f9fde"/><circle cx="6.1" cy="3.4" r="3.9" fill="#fff"/><circle cx="6.1" cy="3.4" r="3.3" fill="#0f9fde"/></svg></div>
<div class="ag" style="top:45px;height:44px"><div class="q">?</div><div class="nm">Emily Moore</div><div class="d" style="left:11px;top:28px;background:#289fdb"></div><div class="d" style="left:25px;top:28px;background:#eda07c"></div><svg width="12" height="12" viewBox="0 0 12 12"><path d="M0.8 11.3 V9.2 Q0.8 6 3.8 6 H8.6 Q11.6 6 11.6 9.2 V11.3z" fill="#0f9fde"/><circle cx="6.1" cy="3.4" r="3.9" fill="#fff"/><circle cx="6.1" cy="3.4" r="3.3" fill="#0f9fde"/></svg></div>
<div class="ag" style="top:89px;height:44px"><div class="q">?</div><div class="nm">Ethan Jones</div><div class="d" style="left:11px;top:28px;background:#289fdb"></div><svg width="12" height="12" viewBox="0 0 12 12"><path d="M0.8 11.3 V9.2 Q0.8 6 3.8 6 H8.6 Q11.6 6 11.6 9.2 V11.3z" fill="#0f9fde"/><circle cx="6.1" cy="3.4" r="3.9" fill="#fff"/><circle cx="6.1" cy="3.4" r="3.3" fill="#0f9fde"/></svg></div>
<div class="ag" style="top:133px;height:44px"><div class="q">?</div><div class="nm">Harry Williams</div><div class="d" style="left:11px;top:28px;background:#289fdb"></div><div class="d" style="left:25px;top:28px;background:#eda07c"></div><svg width="12" height="12" viewBox="0 0 12 12"><path d="M0.8 11.3 V9.2 Q0.8 6 3.8 6 H8.6 Q11.6 6 11.6 9.2 V11.3z" fill="#0f9fde"/><circle cx="6.1" cy="3.4" r="3.9" fill="#fff"/><circle cx="6.1" cy="3.4" r="3.3" fill="#0f9fde"/></svg></div>
<div class="ag" style="top:177px;height:43px"><div class="q">?</div><div class="nm">Isabella Tylor</div><div class="d" style="left:11px;top:28.5px;background:#289fdb"></div><div class="d" style="left:25px;top:28.5px;background:#eda07c"></div><svg width="12" height="12" viewBox="0 0 12 12"><path d="M0.8 11.3 V9.2 Q0.8 6 3.8 6 H8.6 Q11.6 6 11.6 9.2 V11.3z" fill="#0f9fde"/><circle cx="6.1" cy="3.4" r="3.9" fill="#fff"/><circle cx="6.1" cy="3.4" r="3.3" fill="#0f9fde"/></svg></div>
</div>
</body></html>
